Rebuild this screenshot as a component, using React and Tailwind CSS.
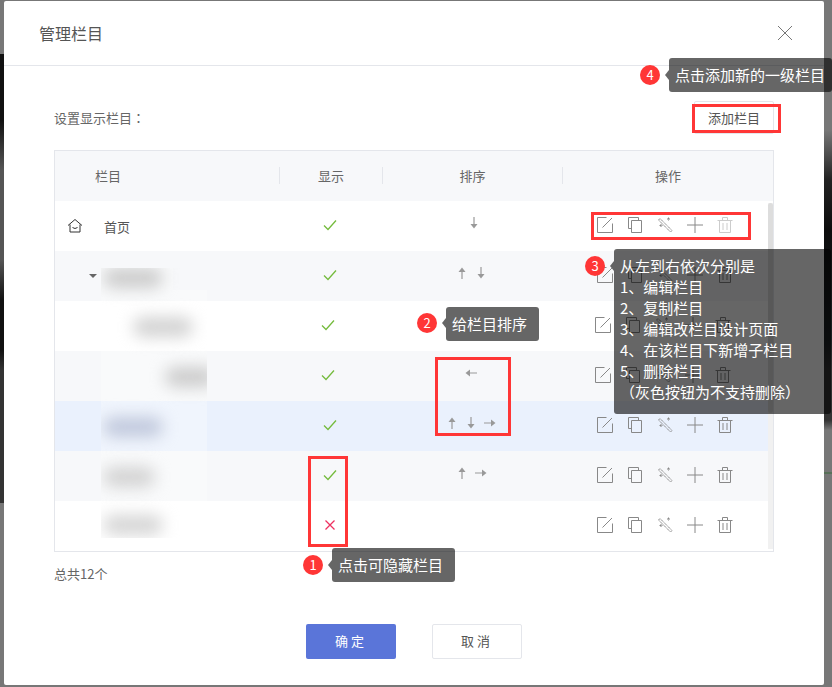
import React from "react";

const rows = [
  { bg: "bg-white", arrows: ["down"], shift: false, first: true },
  { bg: "bg-[#f7f8fa]", arrows: ["up", "down"], shift: false },
  { bg: "bg-white", arrows: [], shift: true },
  { bg: "bg-[#f7f8fa]", arrows: ["left"], shift: true },
  { bg: "bg-[#eaf1fd]", arrows: ["up", "down", "right"], shift: false },
  { bg: "bg-[#f7f8fa]", arrows: ["up", "right"], shift: false },
  { bg: "bg-white", arrows: [], shift: false, hidden: true },
];

function Arrow({ dir }) {
  const rot = { up: "rotate-0", down: "rotate-180", left: "-rotate-90", right: "rotate-90" }[dir];
  return (
    <svg viewBox="0 0 14 14" className={`h-[14px] w-[14px] ${rot}`}>
      <path d="M7 3v10" stroke="#999" strokeWidth="1.2" fill="none" />
      <path d="M7 1.500 3.500 6h7z" fill="#999" />
    </svg>
  );
}

function Check() {
  return (
    <svg viewBox="0 0 14 12" className="h-[12px] w-[14px]">
      <path d="M1 6.500 5 10.500 13 1.500" stroke="#74bb3c" strokeWidth="1.3" fill="none" />
    </svg>
  );
}

function Cross() {
  return (
    <svg viewBox="0 0 12 12" className="h-[12px] w-[12px]">
      <path d="M1.500 1.500l9 9M10.500 1.500l-9 9" stroke="#ee3160" strokeWidth="1.3" fill="none" />
    </svg>
  );
}

function OpIcons({ disabledTrash }) {
  return (
    <div className="flex items-center gap-[14px] text-[#888]">
      <svg viewBox="0 0 16 16" className="h-[16px] w-[16px]" fill="none" stroke="currentColor">
        <path d="M9.500.5H.5v15h15V6.500M15 1 5.500 10.500" />
      </svg>
      <svg viewBox="0 0 16 16" className="h-[16px] w-[16px]" fill="none" stroke="currentColor">
        <path d="M11.500 3V.5H1.500v11H4M4.500 3.500h10v12h-10z" />
      </svg>
      <svg viewBox="0 0 16 16" className="h-[16px] w-[16px]" fill="none" stroke="currentColor" strokeDasharray="1.500 0.500">
        <path d="M3 1.500 15 13.500 13.500 15 1.500 3zM11.500.5v3M10 2h3M4 7v3M2.500 8.500h3" />
      </svg>
      <svg viewBox="0 0 16 16" className="h-[16px] w-[16px]" fill="none" stroke="currentColor">
        <path d="M8 0v16M0 8h16" />
      </svg>
      <svg viewBox="0 0 16 16" className={`h-[16px] w-[16px] ${disabledTrash ? "text-[#ccc]" : ""}`} fill="none" stroke="currentColor">
        <path d="M.5 3.500h15M5.500 3V.5h5V3M2.500 3.500v12h11v-12M6 6v7M10 6v7" />
      </svg>
    </div>
  );
}

function Tip({ className, children }) {
  return <div className={`absolute rounded-[3px] bg-black/60 text-[15px] text-white ${className}`}>{children}</div>;
}

function Badge({ className, n }) {
  return (
    <div className={`absolute flex h-[20px] w-[20px] items-center justify-center rounded-full bg-[#ff3636] text-[13px] text-white ${className}`}>
      {n}
    </div>
  );
}

function Nub({ className }) {
  return <div className={`absolute h-0 w-0 border-y-[5px] border-r-[4px] border-y-transparent border-r-black/60 ${className}`} />;
}

function RedBox({ className }) {
  return <div className={`absolute border-[3px] border-[#ff3636] ${className}`} />;
}

export default function App() {
  return (
    <div className="relative h-[687px] w-[832px] overflow-hidden bg-[#777] pl-[4px] pt-[1px] font-['Noto_Sans_CJK_SC',sans-serif]">
      {/* page behind the dialog, only its edges show */}
      <div className="absolute left-0 top-0 h-[687px] w-[4px] bg-[linear-gradient(#777_54px,#111_54px,#111_120px,#555_170px,#555_260px,#111_300px,#111_350px,#333_370px,#333_503px,#777_503px)]" />
      <div className="absolute right-0 top-0 h-[687px] w-[8px] bg-[linear-gradient(#777_130px,#222_180px,#0d0d0d_230px,#1d2225_340px,#333_370px,#333_420px,#777_430px,#777_472px,#3a6b3a_473px,#777_474px)]" />

      <div className="relative flex h-[684px] w-[820px] flex-col rounded-[2px] bg-white">
        <div className="flex h-[65px] shrink-0 items-center justify-between border-b border-[#e4e6eb] pl-[35px] pr-[31px]">
          <span className="text-[16px] text-[#555]">管理栏目</span>
          <svg viewBox="0 0 16 16" className="h-[16px] w-[16px]" fill="none" stroke="#777">
            <path d="M1 1l14 14M15 1 1 15" />
          </svg>
        </div>

        <div className="flex flex-1 flex-col px-[50px]">
          <div className="mt-[35px] flex h-[33px] items-center justify-between">
            <span className="text-[13px] text-[#666]">
              设置显示栏目<span className="font-['Noto_Sans_CJK_TC',sans-serif]">：</span>
            </span>
            <button className="h-[33px] w-[80px] rounded-[2px] border border-[#e4e6eb] text-[13px] text-[#555]">添加栏目</button>
          </div>

          <div className="mt-[16px] h-[402px] w-[720px] border border-[#e4e6eb]">
            <div className="grid h-[50px] grid-cols-[225px_103px_180px_1fr] items-center bg-[#f7f8fa] pb-[2px] text-[13px] text-[#666]">
              <div className="h-[17px] border-r border-[#e4e6eb] pl-[40px] leading-[17px]">栏目</div>
              <div className="h-[17px] border-r border-[#e4e6eb] text-center leading-[17px]">显示</div>
              <div className="h-[17px] border-r border-[#e4e6eb] text-center leading-[17px]">排序</div>
              <div className="h-[17px] text-center leading-[17px]">操作</div>
            </div>
            <div className="flex">
              <div className="w-[714px]">
                {rows.map((r, i) => (
                  <div key={i} className={`grid h-[50px] grid-cols-[225px_103px_180px_1fr] items-center ${r.bg}`}>
                    <div className="flex items-center">
                      {r.first && (
                        <>
                          <svg viewBox="0 0 16 16" className="ml-[12px] h-[16px] w-[16px]" fill="none" stroke="#333">
                            <path d="M1 7.500 8 1.500l7 6M3 6.500v7.500h10V6.500M5.500 9.500q2.500 2 5 0" />
                          </svg>
                          <span className="ml-[21px] mt-[2px] text-[13px] text-[#555]">首页</span>
                        </>
                      )}
                      {i === 1 && (
                        <div className="ml-[34px] h-0 w-0 border-x-[4px] border-t-[4px] border-x-transparent border-t-[#666]" />
                      )}
                    </div>
                    <div className={`flex items-center justify-center pb-[2px] ${r.shift ? "pr-[7px]" : "pr-[3px]"}`}>
                      {r.hidden ? <Cross /> : <Check />}
                    </div>
                    <div className={`flex items-center justify-center gap-[5px] pb-[6px] ${r.first ? "pl-[1px]" : "pr-[4px]"}`}>
                      {r.arrows.map((d) => (
                        <Arrow key={d} dir={d} />
                      ))}
                    </div>
                    <div className={`flex items-center justify-center pb-[2px] ${r.shift ? "pr-[6px]" : "pr-[2px]"}`}>
                      <OpIcons disabledTrash={r.first} />
                    </div>
                  </div>
                ))}
              </div>
              <div className="mt-[2px] h-[346px] w-[5px] bg-[#f1f1f1]">
                <div className="h-[210px] rounded-full bg-[#ddd]" />
              </div>
            </div>
          </div>

          <div className="mt-[12px] text-[13px] text-[#666]">总共12个</div>

          <div className="mt-[40px] flex justify-center gap-[36px]">
            <button className="h-[35px] w-[90px] rounded-[2px] bg-[#5a75d9] pb-[1px] text-[13px] tracking-[3px] text-white">确定</button>
            <button className="h-[35px] w-[90px] rounded-[2px] border border-[#e4e6eb] pb-[1px] text-[13px] tracking-[3px] text-[#555]">取消</button>
          </div>
        </div>
      </div>

      {/* blurred-out column names */}
      <div className="absolute left-[101px] top-[268px] h-[270px] w-[106px] overflow-hidden">
        <div className="absolute left-0 top-0 h-[22px] w-[72px] bg-white/30" />
        <div className="absolute left-0 top-[22px] h-[248px] w-[106px] bg-white/30" />
        <div className="absolute left-[2px] top-[0px] h-[20px] w-[60px] rounded-full bg-[#cbcbcb] blur-[8px]" />
        <div className="absolute left-[32px] top-[49px] h-[20px] w-[60px] rounded-full bg-[#d2d2d2] blur-[8px]" />
        <div className="absolute left-[64px] top-[99px] h-[20px] w-[50px] rounded-full bg-[#cbcbcb] blur-[8px]" />
        <div className="absolute left-[2px] top-[149px] h-[20px] w-[60px] rounded-full bg-[#c0c8dc] blur-[8px]" />
        <div className="absolute left-[2px] top-[199px] h-[20px] w-[52px] rounded-full bg-[#d2d2d2] blur-[8px]" />
        <div className="absolute left-[2px] top-[247px] h-[20px] w-[60px] rounded-full bg-[#d5d5d5] blur-[8px]" />
      </div>

      <RedBox className="left-[692px] top-[104px] h-[29px] w-[89px]" />
      <RedBox className="left-[591px] top-[212px] h-[28px] w-[160px]" />
      <RedBox className="left-[435px] top-[357px] h-[79px] w-[76px]" />
      <RedBox className="left-[308px] top-[456px] h-[91px] w-[40px]" />

      <Badge className="left-[640px] top-[65px]" n="4" />
      <Nub className="left-[665px] top-[70px]" />
      <Tip className="left-[669px] top-[58px] flex h-[34px] w-[163px] items-center whitespace-nowrap pl-[6px]">点击添加新的一级栏目</Tip>

      <Badge className="left-[417px] top-[313px]" n="2" />
      <Nub className="left-[442px] top-[318px]" />
      <Tip className="left-[446px] top-[307px] flex h-[34px] w-[93px] items-center whitespace-nowrap pl-[6px]">给栏目排序</Tip>

      <Badge className="left-[303px] top-[555px]" n="1" />
      <Nub className="left-[328px] top-[560px]" />
      <Tip className="left-[332px] top-[548px] flex h-[34px] w-[123px] items-center whitespace-nowrap pl-[6px]">点击可隐藏栏目</Tip>

      <Badge className="left-[585px] top-[256px]" n="3" />
      <Nub className="left-[610px] top-[261px]" />
      <Tip className="left-[614px] top-[249px] h-[165px] w-[217px] whitespace-nowrap pl-[6px] pt-[6px] leading-[21px]">
        <div>从左到右依次分别是</div>
        <div>1、编辑栏目</div>
        <div>2、复制栏目</div>
        <div>3、编辑改栏目设计页面</div>
        <div>4、在该栏目下新增子栏目</div>
        <div>5、删除栏目</div>
        <div>（灰色按钮为不支持删除）</div>
      </Tip>
    </div>
  );
}
